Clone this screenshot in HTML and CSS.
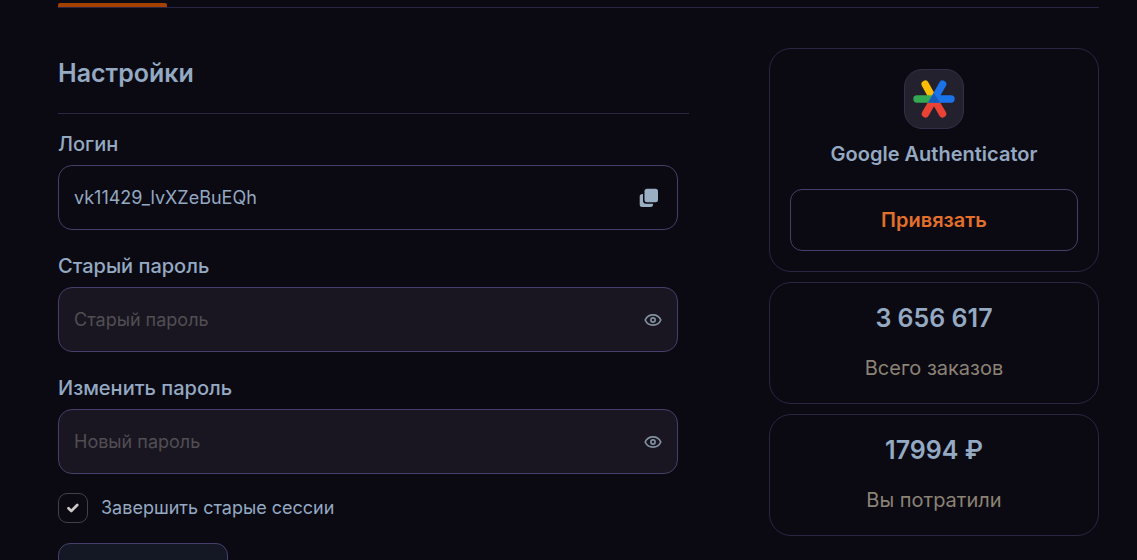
FILE: index.html
```html
<!DOCTYPE html>
<html lang="ru">
<head>
<meta charset="utf-8">
<meta name="viewport" content="width=device-width, initial-scale=1">
<title>Настройки</title>
<link rel="stylesheet" href="styles.css">
</head>
<body>
<svg class="sprite" aria-hidden="true">
  <symbol id="eye" viewBox="0 0 18 12">
    <path d="M1.200 6C2.700 2.500 5.500 .900 9 .900S15.300 2.500 16.800 6C15.300 9.500 12.500 11.100 9 11.100S2.700 9.500 1.200 6Z" fill="none" stroke="currentColor" stroke-width="1.700" stroke-linejoin="round"/>
    <circle cx="9" cy="6" r="2.100" fill="none" stroke="currentColor" stroke-width="1.700"/>
  </symbol>
</svg>
<div class="page">
  <div class="tabs"><span class="tab-active"></span></div>
  <div class="columns">
    <main class="settings">
      <h1 class="title">Настройки</h1>
      <form class="form">
        <div class="field">
          <label class="label" for="login">Логин</label>
          <div class="control">
            <input class="input" id="login" type="text" value="vk11429_lvXZeBuEQh" readonly>
            <button class="icon-button" type="button" aria-label="Скопировать">
              <svg class="copy" viewBox="0 0 20 20">
                <path d="M3.500 6H4V12.500Q4 15.700 7.200 15.700H14V16.500Q14 19 11.500 19H3.200Q.700 19 .700 16.500V8.500Q.700 6 3.500 6Z" fill="currentColor"/>
                <rect x="5.500" y=".700" width="13.500" height="13.500" rx="2.500" fill="currentColor"/>
              </svg>
            </button>
          </div>
        </div>
        <div class="field">
          <label class="label" for="old">Старый пароль</label>
          <div class="control filled">
            <input class="input" id="old" type="password" placeholder="Старый пароль">
            <button class="icon-button" type="button" aria-label="Показать пароль"><svg class="eye"><use href="#eye"/></svg></button>
          </div>
        </div>
        <div class="field">
          <label class="label" for="new">Изменить пароль</label>
          <div class="control filled">
            <input class="input" id="new" type="password" placeholder="Новый пароль">
            <button class="icon-button" type="button" aria-label="Показать пароль"><svg class="eye"><use href="#eye"/></svg></button>
          </div>
        </div>
        <label class="check">
          <span class="check-mark">
            <input class="check-input" type="checkbox" checked>
            <svg class="tick" viewBox="0 0 14 12"><path d="M2.500 6.200L5.300 9L11.200 3" fill="none" stroke="currentColor" stroke-width="2.700" stroke-linecap="round" stroke-linejoin="round"/></svg>
          </span>
          Завершить старые сессии
        </label>
        <button class="submit" type="submit" aria-label="Сохранить"></button>
      </form>
    </main>
    <aside class="side">
      <section class="card auth">
        <div class="logo">
          <svg class="logo-mark" viewBox="0 0 42 38" fill="none" stroke-width="7.400" stroke-linecap="round">
            <path d="M12.200 4.200L19 16.500" stroke="#fbbc04"/>
            <path d="M21 19L12.400 33.800M21 19L29.600 33.800" stroke="#ea4335"/>
            <path d="M4 19H20" stroke="#34a853"/>
            <path d="M29.600 4.200L21.300 19H38" stroke="#1a73e8" stroke-linejoin="round"/>
            <path d="M20.800 13L27 22.700H14.800Z" fill="#185abc"/>
          </svg>
        </div>
        <h2 class="auth-title">Google Authenticator</h2>
        <button class="link-button" type="button">Привязать</button>
      </section>
      <section class="card stat">
        <strong class="value">3 656 617</strong>
        <span class="caption">Всего заказов</span>
      </section>
      <section class="card stat">
        <strong class="value">17994 ₽</strong>
        <span class="caption">Вы потратили</span>
      </section>
    </aside>
  </div>
</div>
</body>
</html>
```

FILE: styles.css
```css
* { box-sizing: border-box; }

html {
  background: #0b0912;
  scrollbar-width: none;
}

body {
  margin: 0;
  color: #94a9c2;
  font-family: Inter, "Liberation Sans", sans-serif;
  font-size: 20px;
  line-height: 24px;
}

button, input { font: inherit; }

.sprite { display: none; }

.page { padding: 3px 38px 0 58px; }

.tabs {
  display: flex;
  border-bottom: 1px solid #2b2643;
}

.tab-active {
  width: 109px;
  height: 4px;
  border-radius: 2px 2px 0 0;
  background: #a34100;
}

.columns {
  display: grid;
  grid-template-columns: minmax(0, 1fr) 330px;
  gap: 80px;
  padding-top: 40px;
  align-items: start;
}

.title {
  margin: 0;
  padding: 9px 0 24px;
  border-bottom: 1px solid #2b2643;
  font-size: 25px;
  font-weight: 600;
  line-height: 32px;
}

.form {
  display: flex;
  flex-direction: column;
  align-items: flex-start;
  padding: 18px 11px 40px 0;
}

.field {
  width: 100%;
  margin-bottom: 24px;
}

.field:nth-child(3) { margin-bottom: 19px; }

.label {
  display: block;
  margin-bottom: 9px;
  font-weight: 500;
}

.control {
  display: flex;
  align-items: center;
  height: 65px;
  padding: 0 15px;
  border: 1px solid #473f6b;
  border-radius: 14px;
}

.filled { background: #191622; }

.input {
  flex: 1;
  min-width: 0;
  padding: 0;
  border: 0;
  outline: 0;
  background: none;
  color: inherit;
  font-size: 18px;
}

.input::placeholder { color: #514e52; opacity: 1; }

.icon-button {
  display: flex;
  align-items: center;
  justify-content: center;
  padding: 0;
  border: 0;
  background: none;
  color: #99adc3;
}

.copy { width: 20px; height: 20px; margin-right: 3px; }

.eye { width: 18px; height: 12px; color: #82919f; }

.check {
  display: flex;
  align-items: center;
  gap: 13px;
  font-size: 18px;
}

.check-mark {
  display: grid;
  place-items: center;
}

.check-input {
  grid-area: 1 / 1;
  width: 30px;
  height: 30px;
  margin: 0;
  appearance: none;
  border: 1px solid #414148;
  border-radius: 9px;
}

.tick {
  grid-area: 1 / 1;
  width: 14px;
  height: 12px;
  color: #cbc8c5;
}

.submit {
  width: 170px;
  height: 62px;
  margin-top: 20px;
  border: 1px solid #473f6b;
  border-radius: 12px;
  background: #141724;
}

.side {
  display: grid;
  gap: 10px;
}

.card {
  display: flex;
  flex-direction: column;
  align-items: center;
  border: 1px solid #2b2643;
  border-radius: 22px;
}

.auth { padding: 20px; }

.logo {
  display: grid;
  place-items: center;
  width: 60px;
  height: 60px;
  border: 1px solid #342f49;
  border-radius: 18px;
  background: #24212e;
}

.logo-mark { width: 42px; height: 38px; }

.auth-title {
  margin: 13px 0 23px;
  font-size: 20px;
  font-weight: 600;
}

.link-button {
  width: 100%;
  height: 62px;
  border: 1px solid #473f6b;
  border-radius: 12px;
  background: none;
  color: #e2702b;
  font-weight: 600;
}

.stat { padding: 19px 20px 23px; gap: 22px; }

.value {
  font-size: 25px;
  font-weight: 600;
  line-height: 32px;
}

.caption { color: #8b8375; }
```
